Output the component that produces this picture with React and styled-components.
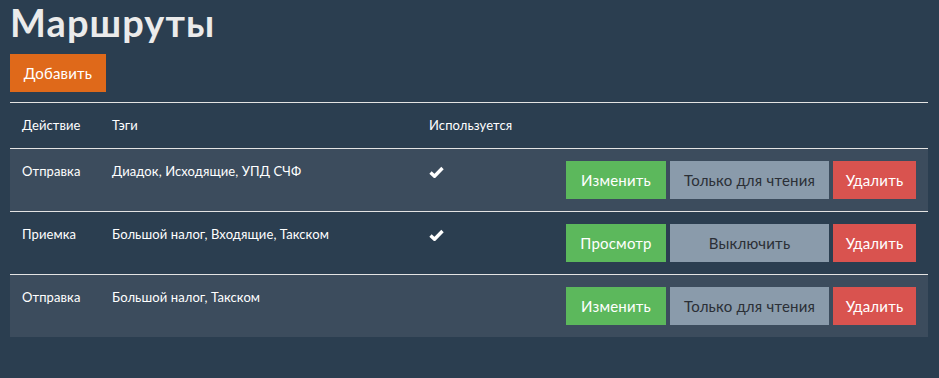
import React from "react";
import styled, { createGlobalStyle } from "styled-components";

const GlobalStyle = createGlobalStyle`
  html, body {
    margin: 0;
    padding: 0;
    background: #2b3e50;
    color: #ffffff;
    font-family: Lato, "Liberation Sans", sans-serif;
  }
`;

const routes = [
  { action: "Отправка", tags: "Диадок, Исходящие, УПД СЧФ", used: true, edit: "Изменить", toggle: "Только для чтения" },
  { action: "Приемка", tags: "Большой налог, Входящие, Такском", used: true, edit: "Просмотр", toggle: "Выключить" },
  { action: "Отправка", tags: "Большой налог, Такском", used: false, edit: "Изменить", toggle: "Только для чтения" },
];

const colors = {
  primary: "#df691a",
  success: "#5cb85c",
  muted: "#8a9bab",
  danger: "#d9534f",
};

export default function App() {
  return (
    <Page>
      <GlobalStyle />
      <Title>Маршруты</Title>
      <Button variant="primary" width={96}>Добавить</Button>
      <Table>
        <colgroup>
          <col style={{ width: 90 }} />
          <col style={{ width: 317 }} />
          <col style={{ width: 130 }} />
          <col />
        </colgroup>
        <thead>
          <tr>
            <HeadCell>Действие</HeadCell>
            <HeadCell>Тэги</HeadCell>
            <HeadCell>Используется</HeadCell>
            <HeadCell />
          </tr>
        </thead>
        <tbody>
          {routes.map((r, i) => (
            <Row key={i} striped={i % 2 === 0}>
              <Cell>{r.action}</Cell>
              <Cell>{r.tags}</Cell>
              <Cell>{r.used && <Check />}</Cell>
              <Cell>
                <Actions>
                  <Button variant="success" width={100}>{r.edit}</Button>
                  <Button variant="muted" width={159}>{r.toggle}</Button>
                  <Button variant="danger" width={83}>Удалить</Button>
                </Actions>
              </Cell>
            </Row>
          ))}
        </tbody>
      </Table>
    </Page>
  );
}

function Check() {
  return (
    <CheckIcon viewBox="0 0 15 12" width="15" height="12">
      <path d="M1.5 6.5 L5.5 10.2 L13.5 2" fill="none" stroke="#ffffff" strokeWidth="3.4" strokeLinejoin="round" />
    </CheckIcon>
  );
}

const Page = styled.div`
  padding: 0 11px 0 10px;
  min-height: 378px;
  box-sizing: border-box;
`;

const Title = styled.h1`
  margin: 0;
  padding-top: 1px;
  font-size: 38px;
  font-weight: 700;
  letter-spacing: 1.1px;
  line-height: 42px;
  color: #ebebeb;
  margin-bottom: 11px;
`;

const Button = styled.button`
  display: inline-flex;
  flex-shrink: 0;
  align-items: center;
  justify-content: center;
  box-sizing: border-box;
  height: 38px;
  padding: 0 12px;
  width: ${(p) => (p.width ? `${p.width}px` : "auto")};
  border: none;
  border-radius: 0;
  font-family: Lato, "Liberation Sans", sans-serif;
  font-size: 15px;
  letter-spacing: 0.2px;
  background: ${(p) => colors[p.variant]};
  color: ${(p) => (p.variant === "muted" ? "#2b2f36" : "#ffffff")};
  cursor: pointer;
`;

const Table = styled.table`
  width: 918px;
  margin-top: 10px;
  border-collapse: collapse;
  table-layout: fixed;
  font-size: 13px;
  line-height: 21px;
  letter-spacing: 0.1px;
  border-top: 1px solid #e3e3e3;
`;

const HeadCell = styled.th`
  text-align: left;
  font-weight: 400;
  padding: 12px;
  vertical-align: top;
  white-space: nowrap;
`;

const Row = styled.tr`
  border-top: 1px solid #e3e3e3;
  background: ${(p) => (p.striped ? "#3c4c5d" : "transparent")};
`;

const Cell = styled.td`
  padding: 12px;
  vertical-align: top;
`;

const Actions = styled.div`
  display: flex;
  justify-content: flex-end;
  gap: 4px;
`;

const CheckIcon = styled.svg`
  display: block;
  margin-top: 5px;
`;
